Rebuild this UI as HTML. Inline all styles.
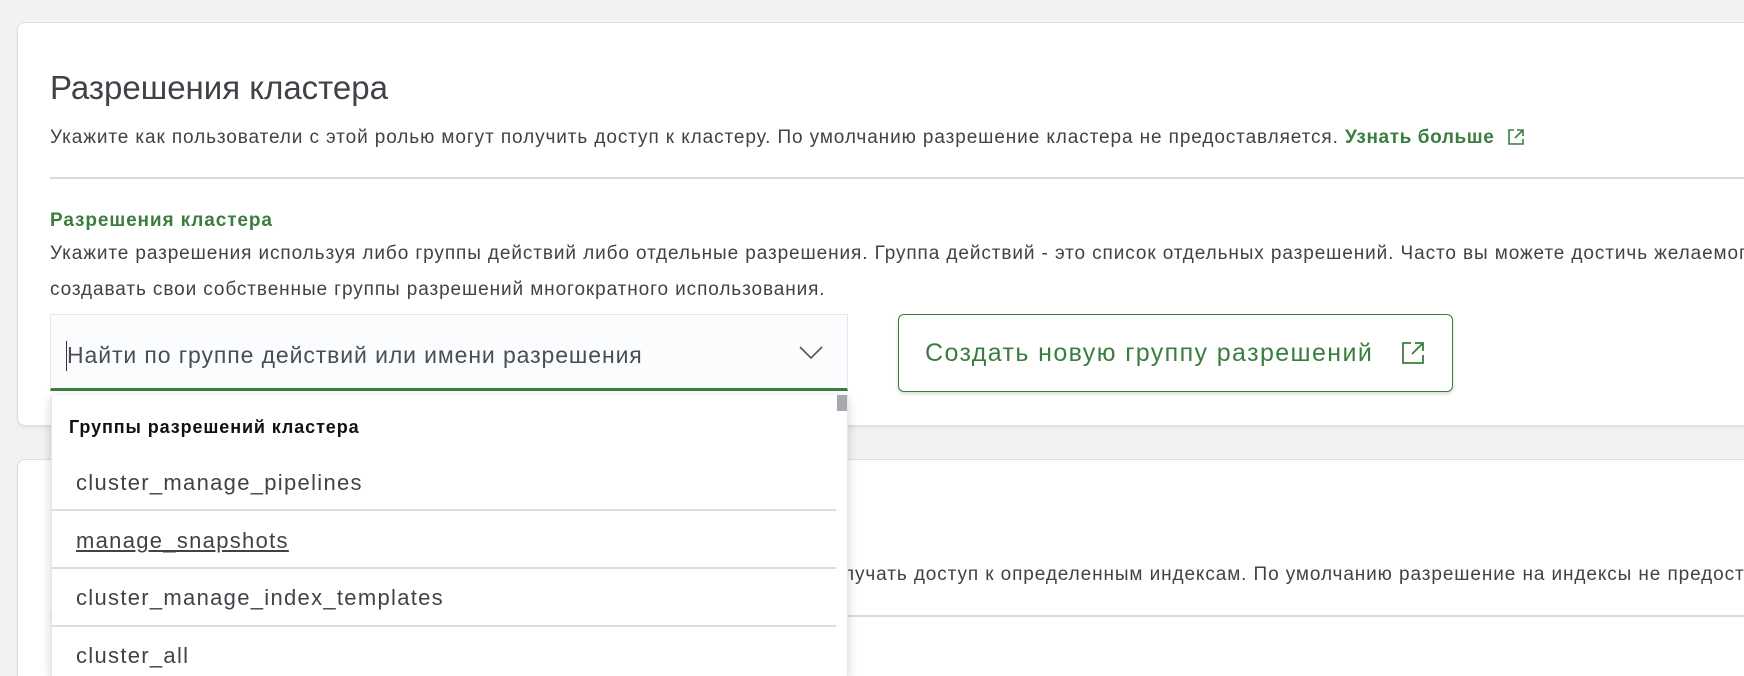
<!DOCTYPE html>
<html><head><meta charset="utf-8">
<style>
*{box-sizing:border-box;margin:0;padding:0}
html{width:1744px;height:676px;overflow:hidden}
body{width:1744px;height:676px;overflow:hidden;background:#f1f2f4;font-family:"Liberation Sans","DejaVu Sans",sans-serif;color:#3f4348;position:relative}
.card{position:absolute;left:17px;width:1740px;background:#fff;border:1px solid #dcdee2;border-radius:8px;box-shadow:0 2px 3px rgba(0,0,0,.06)}
.abs{position:absolute;white-space:nowrap}
.green{color:#3b7d3f}
.hr{position:absolute;left:50px;width:1694px;height:2px;background:#d7d9dd}
.t{font-size:19px;letter-spacing:0.9px}
.it{font-size:22px;letter-spacing:1.3px}
.clip{position:absolute;left:0;top:0;width:1744px;height:676px;overflow:hidden}
</style></head><body>
<div class="clip">
<div class="card" style="top:22px;height:404px"></div>
<div class="card" style="top:459px;height:230px"></div>

<div class="abs" style="left:50px;top:69px;font-size:33px;color:#3f4348">Разрешения кластера</div>
<div class="abs t" style="left:50px;top:127px">Укажите как пользователи с этой ролью могут получить доступ к кластеру. По умолчанию разрешение кластера не предоставляется. <b class="green" style="letter-spacing:0.6px">Узнать больше</b>
<svg width="18" height="18" viewBox="0 0 18 18" style="vertical-align:-3px;margin-left:6px" fill="none" stroke="#3b7d3f" stroke-width="1.6"><path d="M7 2H2v14h14v-5M10 2h6v6M16 2L8 10"/></svg></div>
<div class="hr" style="top:177px"></div>

<div class="abs green" style="left:50px;top:210px;font-size:19px;font-weight:bold;letter-spacing:0.9px">Разрешения кластера</div>
<div class="abs t" style="left:50px;top:243px;width:1694px;overflow:hidden">Укажите разрешения используя либо группы действий либо отдельные разрешения. Группа действий - это список отдельных разрешений. Часто вы можете достичь желаемого уровня безопасности используя группы действий. Вы можете</div>
<div class="abs t" style="left:50px;top:279px">создавать свои собственные группы разрешений многократного использования.</div>

<div class="abs" style="left:50px;top:314px;width:798px;height:77px;background:#fbfcfd;border:1px solid #e6e8eb;border-bottom:3px solid #3b7d3f"></div>
<div class="abs" style="left:66px;top:341px;width:1px;height:30px;background:#333"></div>
<div class="abs" style="left:67px;top:342px;font-size:23px;letter-spacing:0.9px;color:#4a4e53">Найти по группе действий или имени разрешения</div>
<svg class="abs" style="left:798px;top:344px" width="26" height="16" viewBox="0 0 26 16" fill="none" stroke="#555" stroke-width="1.6"><path d="M2 3l11 11L24 3"/></svg>

<div class="abs" style="left:898px;top:314px;width:555px;height:78px;border:1px solid #3b7d3f;border-radius:6px;background:#fff;box-shadow:0 2px 3px rgba(0,0,0,.15)"></div>
<div class="abs green" style="left:925px;top:339px;font-size:25px;letter-spacing:1.4px">Создать новую группу разрешений</div>
<svg class="abs" style="left:1401px;top:341px" width="24" height="24" viewBox="0 0 24 24" fill="none" stroke="#3b7d3f" stroke-width="1.8"><path d="M10 2H2v20h20v-8M14 2h8v8M22 2L11 13"/></svg>

<div class="abs t" style="left:843px;top:564px;width:901px;overflow:hidden">лучать доступ к определенным индексам. По умолчанию разрешение на индексы не предоставляется.</div>
<div class="hr" style="top:615px"></div>

<div class="abs" style="left:51px;top:395px;width:797px;height:281px;background:#fff;box-shadow:0 3px 10px rgba(0,0,0,.18);border-left:1px solid #e4e6e9;border-right:1px solid #e4e6e9"></div>
<div class="abs" style="left:837px;top:395px;width:10px;height:16px;background:#a5a8ad"></div>
<div class="abs" style="left:69px;top:417px;font-size:18px;font-weight:bold;letter-spacing:0.9px;color:#111">Группы разрешений кластера</div>
<div class="abs it" style="left:76px;top:470px">cluster_manage_pipelines</div>
<div class="abs" style="left:52px;top:509px;width:784px;height:2px;background:#dcdee2"></div>
<div class="abs it" style="left:76px;top:528px;text-decoration:underline">manage_snapshots</div>
<div class="abs" style="left:52px;top:567px;width:784px;height:2px;background:#dcdee2"></div>
<div class="abs it" style="left:76px;top:585px">cluster_manage_index_templates</div>
<div class="abs" style="left:52px;top:625px;width:784px;height:2px;background:#dcdee2"></div>
<div class="abs it" style="left:76px;top:643px">cluster_all</div>
</div>
</body></html>
